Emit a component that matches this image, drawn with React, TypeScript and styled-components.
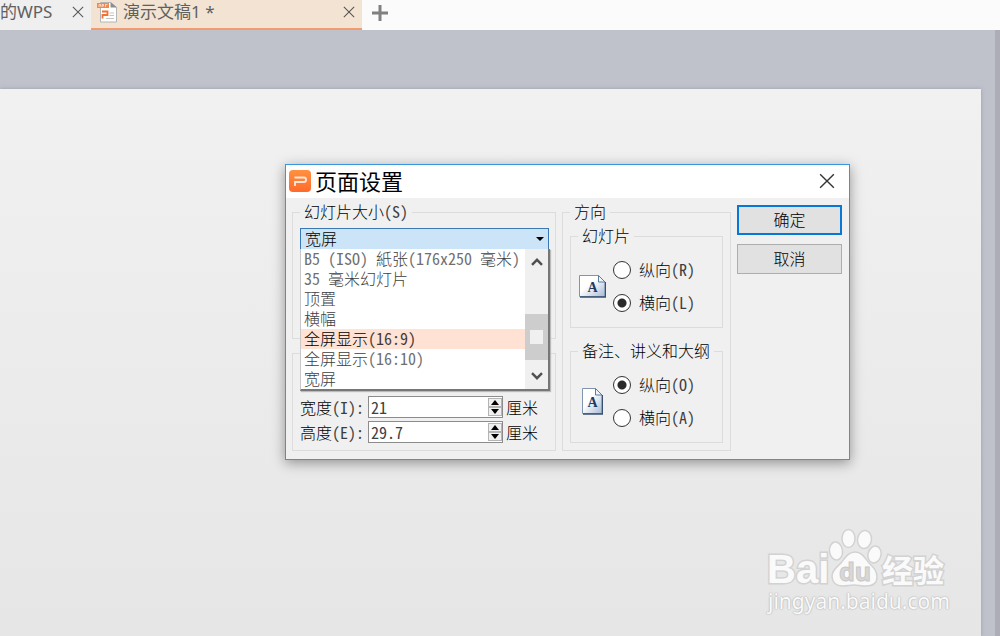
import React from "react";
import styled, { createGlobalStyle } from "styled-components";

const GlobalStyle = createGlobalStyle`
  * { box-sizing: border-box; }
  body {
    margin: 0;
    font-family: "Noto Sans CJK SC", sans-serif;
    font-size: 16px;
    line-height: 18px;
    color: #000;
    font-weight: 300;
  }
  button, input, select { font: inherit; color: inherit; }
`;

const Window = styled.div`
  position: relative;
  display: flex;
  flex-direction: column;
  min-height: 100vh;
  overflow: hidden;
`;

const TabBar = styled.nav`
  display: flex;
  height: 30px;
  background: #fbfbfb;
`;

const Tab = styled.div<{ $active?: boolean }>`
  display: flex;
  align-items: center;
  width: ${(p) => (p.$active ? 271 : 91)}px;
  padding: ${(p) => (p.$active ? "0 7px 4px 6px" : "0 7px 4px 0")};
  border-bottom: 2px solid ${(p) => (p.$active ? "#f29b6f" : "#efefef")};
  background: ${(p) => (p.$active ? "#f2e3d3" : "#efefef")};
`;

const TabTitle = styled.a`
  flex: 1;
  font-family: "Noto Sans", "Noto Sans CJK SC", sans-serif;
  font-size: 17px;
  font-weight: 400;
  line-height: 24px;
  color: #606060;
  text-decoration: none;
  white-space: pre;
`;

const IconButton = styled.button`
  display: flex;
  align-items: center;
  justify-content: center;
  padding: 0;
  border: 0;
  background: none;
`;

const NewTab = styled(IconButton)`
  width: 36px;
  padding-bottom: 5px;
`;

const FileIcon = styled.svg`
  margin-right: 5px;
`;

const Workspace = styled.main`
  display: flex;
  flex: 1;
  padding: 59px 14px 0 0;
  background: #bfc2cb;
  border-right: 5px solid #adadb7;
`;

const Sheet = styled.section`
  flex: 1;
  background: linear-gradient(#f1f1f1, #e6e6e6);
  box-shadow: 0 0 4px #9c9aaa;
`;

const Dialog = styled.section`
  position: absolute;
  left: 285px;
  top: 164px;
  width: 565px;
  border: 1px solid #3a96e0;
  background: #f0f0f0;
  box-shadow: 0 3px 12px rgba(0, 0, 0, 0.38);
`;

const TitleBar = styled.header`
  display: flex;
  align-items: center;
  height: 33px;
  padding: 0 14px 2px 3px;
  background: #fff;
`;

const Title = styled.h1`
  flex: 1;
  margin: 0 0 0 4px;
  padding-bottom: 2px;
  font-size: 22px;
  font-weight: 400;
  line-height: 28px;
`;

const DialogBody = styled.form`
  display: grid;
  grid-template-columns: 264px 169px 1fr;
  gap: 6px;
  padding: 4px 7px 8px 6px;
`;

const Column = styled.div`
  display: flex;
  flex-direction: column;
`;

const Group = styled.fieldset`
  min-width: 0;
  margin: 0;
  padding: 4px 7px 7px;
  border: 1px solid #dcdcdc;
`;

const SizeGroup = styled(Group)`
  height: 137px;
  padding: 6px 7px;
`;

const MeasureGroup = styled(Group)`
  display: flex;
  flex-direction: column;
  gap: 3px;
  margin-top: 14px;
  padding-top: 42px;
`;

const OrientationGroup = styled(Group)`
  padding: 14px 7px;
  & + & { margin-top: 13px; }
`;

const Legend = styled.legend`
  height: 20px;
  padding: 0 4px;
  white-space: nowrap;
`;

const Narrow = styled.span`
  font-family: "Noto Sans Mono CJK SC", "Liberation Mono", monospace;
  line-height: 16px;
  white-space: pre;
  opacity: 0.75;
`;

const ComboBox = styled.div`
  position: relative;
  width: 249px;
`;

const SizeSelect = styled.select`
  display: block;
  appearance: none;
  width: 100%;
  height: 22px;
  padding: 0 4px 2px;
  border: 1px solid #3a78b4;
  border-radius: 0;
  background: #cce4f7;
`;

const ComboArrow = styled.svg`
  position: absolute;
  right: 5px;
  top: 9px;
  pointer-events: none;
`;

const Popup = styled.div`
  position: absolute;
  z-index: 1;
  left: 0;
  top: 21px;
  display: flex;
  width: 250px;
  border: solid #777;
  border-width: 0 2px 2px 1px;
  border-left-color: #c8c8c8;
  background: #fff;
  box-shadow: 1px 1px 1px #bbb;
`;

const Options = styled.ul`
  flex: 1;
  margin: 0;
  padding: 0;
  list-style: none;
`;

const Option = styled.li<{ $selected: boolean }>`
  height: 20px;
  padding-left: 3px;
  white-space: nowrap;
  color: ${(p) => (p.$selected ? "#000" : "#404040")};
  background: ${(p) => (p.$selected ? "#ffe2d4" : "#fff")};
`;

const ScrollBar = styled.div`
  display: flex;
  flex-direction: column;
  justify-content: space-between;
  width: 23px;
  background: #f0f0f0;
`;

const ScrollButton = styled(IconButton)`
  height: 26px;
`;

const ScrollThumb = styled.div`
  display: grid;
  place-items: center;
  height: 46px;
  margin-top: 35px;
  background: #cdcdcd;
  &::before {
    content: "";
    width: 13px;
    height: 14px;
    background: #f0f0f0;
  }
`;

const MeasureRow = styled.div`
  display: flex;
  align-items: center;
  height: 22px;
`;

const MeasureLabel = styled.label`
  width: 68px;
  white-space: nowrap;
`;

const SpinBox = styled.div`
  display: flex;
  width: 135px;
  height: 22px;
  margin-right: 3px;
  border: 1px solid #8c8c8c;
  background: #fff;
`;

const SpinInput = styled.input`
  flex: 1;
  min-width: 0;
  padding: 0 2px;
  border: 0;
  background: none;
  color: #404040;
  font-family: "Noto Sans Mono CJK SC", "Liberation Mono", monospace;
`;

const SpinButtons = styled.div`
  display: grid;
  width: 14px;
  padding: 1px 0;
`;

const SpinButton = styled(IconButton)`
  border: 1px solid #b4b4b4;
  background: #f0f0f0;
`;

const OrientationBody = styled.div`
  display: grid;
  grid-template-columns: 28px 1fr;
  gap: 7px;
  align-items: center;
`;

const PageIcon = styled.svg`
  justify-self: center;
`;

const Choices = styled.div`
  display: grid;
  gap: 13px;
`;

const Choice = styled.label`
  display: flex;
  align-items: center;
  gap: 8px;
  height: 20px;
  white-space: nowrap;
`;

const ChoiceText = styled.span`
  padding-bottom: 2px;
`;

const Radio = styled.input`
  appearance: none;
  width: 18px;
  height: 18px;
  margin: 0;
  border: 1px solid #333;
  border-radius: 50%;
  background: #fff;
  &:checked { background: radial-gradient(circle, #2b2b2b 4px, #fff 5px); }
`;

const Actions = styled.div`
  display: flex;
  flex-direction: column;
  gap: 9px;
  padding-top: 3px;
`;

const ActionButton = styled.button<{ $primary?: boolean }>`
  height: 30px;
  padding: 0 0 2px;
  border: ${(p) => (p.$primary ? "2px solid #0878d6" : "1px solid #adadad")};
  background: #e1e1e1;
`;

const Watermark = styled.aside`
  position: absolute;
  right: 49px;
  bottom: 23px;
  width: 186px;
`;

const Brand = styled.svg`
  display: block;
  margin-bottom: -10px;
`;

const WatermarkLink = styled.a`
  display: block;
  padding-left: 3px;
  font-family: "Noto Sans", sans-serif;
  font-size: 21px;
  font-weight: 400;
  line-height: 24px;
  color: #fafafa;
  text-decoration: none;
  text-shadow: 0 0 2px #b0b0b0, 0 0 1px #b0b0b0;
`;

function Label({ text }: { text: string }) {
  return (
    <>
      {text.split(/([\x20-\x7e]+)/).map((part, i) =>
        i % 2 ? <Narrow key={i}>{part}</Narrow> : part
      )}
    </>
  );
}

function Cross({ size, color }: { size: number; color: string }) {
  return (
    <svg width={size} height={size} viewBox="0 0 14 14" fill="none" stroke={color} strokeWidth="1.2">
      <path d="M1 1l12 12M13 1L1 13" />
    </svg>
  );
}

function Triangle({ down }: { down?: boolean }) {
  return (
    <svg width="8" height="5" viewBox="0 0 8 5">
      <path d={down ? "M0 0h8L4 5z" : "M0 5h8L4 0z"} fill="#000" />
    </svg>
  );
}

function Chevron({ down }: { down?: boolean }) {
  return (
    <svg width="12" height="8" viewBox="0 0 12 8" fill="none" stroke="#505050" strokeWidth="2.4">
      <path d={down ? "M1 1.2l5 5 5-5" : "M1 6.8l5-5 5 5"} />
    </svg>
  );
}

const sizes = [
  "B5 (ISO) 紙张(176x250 毫米)",
  "35 毫米幻灯片",
  "顶置",
  "横幅",
  "全屏显示(16:9)",
  "全屏显示(16:10)",
  "宽屏",
];

function Measure({ id, label, value }: { id: string; label: string; value: string }) {
  return (
    <MeasureRow>
      <MeasureLabel htmlFor={id}><Label text={label} /></MeasureLabel>
      <SpinBox>
        <SpinInput id={id} type="text" defaultValue={value} />
        <SpinButtons>
          <SpinButton type="button" aria-label="+"><Triangle /></SpinButton>
          <SpinButton type="button" aria-label="-"><Triangle down /></SpinButton>
        </SpinButtons>
      </SpinBox>
      厘米
    </MeasureRow>
  );
}

function PageDrawing({ landscape }: { landscape?: boolean }) {
  const w = landscape ? 27 : 21;
  const h = landscape ? 23 : 27;
  const id = landscape ? "page-wide" : "page-tall";
  return (
    <PageIcon width={w} height={h} viewBox={`0 0 ${w} ${h}`}>
      <defs>
        <linearGradient id={id} x1="0" y1="0" x2="1" y2="1">
          <stop offset="0.4" stopColor="#fff" />
          <stop offset="1" stopColor="#a5bad5" />
        </linearGradient>
      </defs>
      <path d={`M.5 .5H${w - 7.5}L${w - 1} 7V${h - 1.5}H.5z`} fill={`url(#${id})`} stroke="#8095ae" />
      <path d={`M1 ${h - 1}H${w - 0.5}V7`} fill="none" stroke="#38506f" strokeWidth="1.3" />
      <path d={`M${w - 7.5} .5V7H${w - 1}z`} fill="#eef4fb" stroke="#607a9b" />
      <text x={w / 2} y={h / 2 + 5} textAnchor="middle" fontFamily="Liberation Serif, serif" fontSize="14" fontWeight="700" fill="#1e3a60">A</text>
    </PageIcon>
  );
}

function Orientation({ name, legend, options, selected, landscape }: {
  name: string; legend: string; options: string[]; selected: number; landscape?: boolean;
}) {
  return (
    <OrientationGroup>
      <Legend>{legend}</Legend>
      <OrientationBody>
        <PageDrawing landscape={landscape} />
        <Choices>
          {options.map((option, i) => (
            <Choice key={option}>
              <Radio type="radio" name={name} defaultChecked={i === selected} />
              <ChoiceText><Label text={option} /></ChoiceText>
            </Choice>
          ))}
        </Choices>
      </OrientationBody>
    </OrientationGroup>
  );
}

export default function App() {
  return (
    <Window>
      <GlobalStyle />
      <TabBar>
        <Tab>
          <TabTitle href="#home">的WPS</TabTitle>
          <IconButton aria-label="×"><Cross size={12} color="#555" /></IconButton>
        </Tab>
        <Tab $active>
          <FileIcon width="21" height="22" viewBox="0 0 21 22">
            <path d="M3.5 1.5h10l6 5v14.500h-16z" fill="#fff" stroke="#b5b5b5" />
            <path d="M13.5 1v5.5H20z" fill="#8a8e96" />
            <path d="M0 2h12v5H0z" fill="#f08a4c" />
            <path d="M2 6V3.500h1.500v2M5 6V3.500h1.500v1.500H5M8.500 6V3.500h2" fill="none" stroke="#ffe9db" strokeWidth=".8" />
            <path d="M5 10.500h5.500v3.500h-5v3.500" fill="none" stroke="#ef7336" strokeWidth="1.8" />
            <path d="M12.500 12h4.500M12.500 14.500h4.500M9 17.500h8" stroke="#c3c3c3" />
          </FileIcon>
          <TabTitle href="#deck">演示文稿1 *</TabTitle>
          <IconButton aria-label="×"><Cross size={12} color="#555" /></IconButton>
        </Tab>
        <NewTab aria-label="+">
          <svg width="16" height="16" viewBox="0 0 16 16" stroke="#808080" strokeWidth="3">
            <path d="M8 0v16M0 8h16" />
          </svg>
        </NewTab>
      </TabBar>
      <Workspace><Sheet /></Workspace>

      <Dialog role="dialog" aria-labelledby="dialog-title">
        <TitleBar>
          <svg width="22" height="22" viewBox="0 0 22 22">
            <defs>
              <linearGradient id="app-mark" x1="0" y1="0" x2="0" y2="1">
                <stop offset="0" stopColor="#ff9140" />
                <stop offset="1" stopColor="#ff6a2b" />
              </linearGradient>
            </defs>
            <rect width="22" height="22" rx="4" fill="url(#app-mark)" />
            <path d="M5.500 7.500h9.500q2 0 2 2v.5q0 2-2 2H6v4" fill="none" stroke="#ffe8d8" strokeWidth="1.800" />
          </svg>
          <Title id="dialog-title">页面设置</Title>
          <IconButton aria-label="×"><Cross size={16} color="#333" /></IconButton>
        </TitleBar>
        <DialogBody>
          <Column>
            <SizeGroup>
              <Legend><label htmlFor="slide-size"><Label text="幻灯片大小(S)" /></label></Legend>
              <ComboBox>
                <SizeSelect id="slide-size"><option>宽屏</option></SizeSelect>
                <ComboArrow width="8" height="4" viewBox="0 0 8 4"><path d="M0 0h8L4 4z" /></ComboArrow>
                <Popup>
                  <Options role="listbox">
                    {sizes.map((size, i) => (
                      <Option key={size} role="option" aria-selected={i === 4} $selected={i === 4}>
                        <Label text={size} />
                      </Option>
                    ))}
                  </Options>
                  <ScrollBar>
                    <ScrollButton type="button" aria-label="↑"><Chevron /></ScrollButton>
                    <ScrollThumb />
                    <ScrollButton type="button" aria-label="↓"><Chevron down /></ScrollButton>
                  </ScrollBar>
                </Popup>
              </ComboBox>
            </SizeGroup>
            <MeasureGroup>
              <Measure id="slide-width" label="宽度(I):" value="21" />
              <Measure id="slide-height" label="高度(E):" value="29.7" />
            </MeasureGroup>
          </Column>
          <Group>
            <Legend>方向</Legend>
            <Orientation name="slides" legend="幻灯片" options={["纵向(R)", "横向(L)"]} selected={1} landscape />
            <Orientation name="notes" legend="备注、讲义和大纲" options={["纵向(O)", "横向(A)"]} selected={0} />
          </Group>
          <Actions>
            <ActionButton type="button" $primary>确定</ActionButton>
            <ActionButton type="button">取消</ActionButton>
          </Actions>
        </DialogBody>
      </Dialog>

      <Watermark>
        <Brand width="186" height="72" viewBox="-2 -3 186 72" fill="#fafafa" stroke="#d2d2d2" strokeWidth="1.500">
          <g paintOrder="stroke" strokeWidth="3" fontWeight="700">
            <text x="0" y="53" fontFamily="Liberation Sans, sans-serif" fontSize="40">Bai</text>
            <text x="115" y="52" fontFamily="Noto Sans CJK SC, sans-serif" fontSize="31">经验</text>
          </g>
          <ellipse cx="69" cy="21" rx="6.500" ry="9" transform="rotate(-8 69 21)" />
          <ellipse cx="81.500" cy="8.500" rx="6.500" ry="9" />
          <ellipse cx="97.500" cy="9.500" rx="7" ry="9" transform="rotate(8 97.500 9.500)" />
          <ellipse cx="107.500" cy="24.500" rx="6.500" ry="8.500" transform="rotate(14 107.500 24.500)" />
          <path d="M88 22c7 0 10 6 14 11 5 5 8 8 8 14 0 7-5 9-11 9-5 0-8-1-12-1s-7 1-11 1c-7 0-11-4-11-10s5-9 9-13c4-5 7-11 14-11z" />
          <text x="72" y="51" fontFamily="Noto Sans, sans-serif" fontWeight="700" fontSize="25" fill="#d8d8d8" stroke="#c8c8c8" strokeWidth="1">du</text>
        </Brand>
        <WatermarkLink href="#jingyan">jingyan.baidu.com</WatermarkLink>
      </Watermark>
    </Window>
  );
}
